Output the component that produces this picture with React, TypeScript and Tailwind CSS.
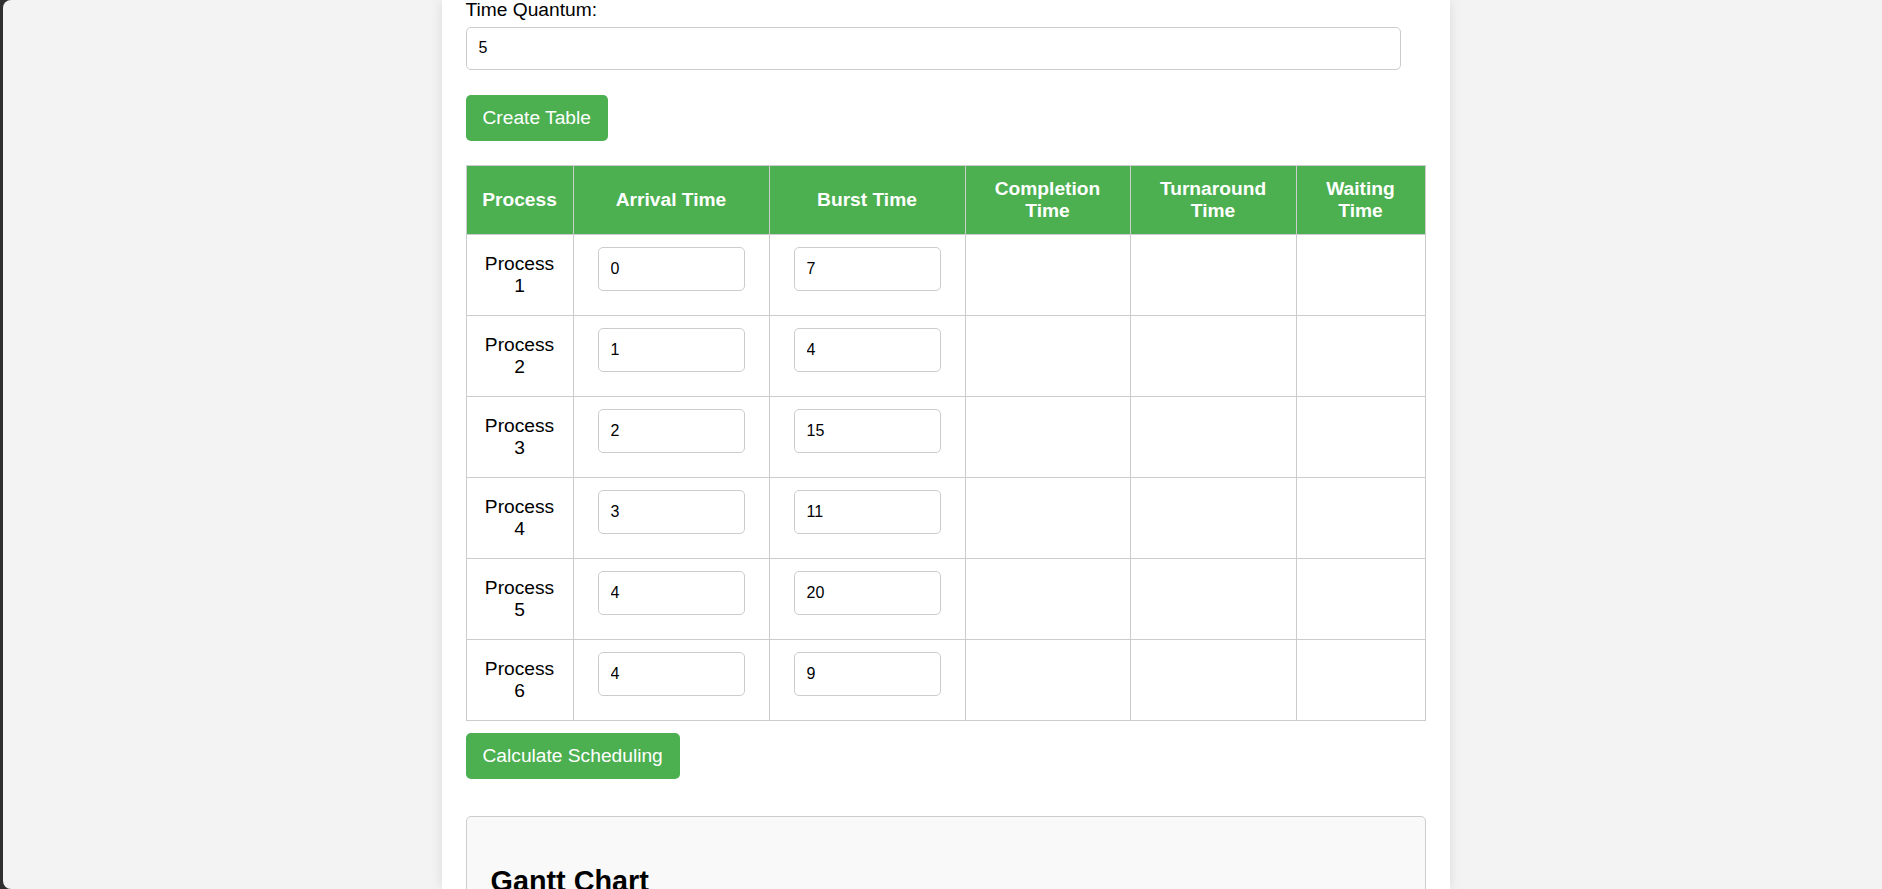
import React from "react";

const rows: [number, number][] = [
  [0, 7],
  [1, 4],
  [2, 15],
  [3, 11],
  [4, 20],
  [4, 9],
];

export default function App() {
  return (
    <div className="h-[889px] w-[1882px] overflow-hidden bg-[#2f2f2f] pl-[3px] font-['Liberation_Sans',Arial,sans-serif] text-black">
      <div className="flex h-full justify-center overflow-hidden rounded-l-[8px] bg-[#f3f3f3] pl-[6px]">
        <div className="w-[1008px] shrink-0 bg-white px-[24px] shadow-[0_0_12px_rgba(0,0,0,0.1)]">
          <label className="mt-[-1.5px] mb-[6px] block text-[19.2px] leading-[22px]">
            Time Quantum:
          </label>
          <input
            type="text"
            defaultValue="5"
            className="block h-[43.5px] w-[935px] rounded-[5px] border border-[#ccc] bg-white px-[12px] text-[16px] text-black outline-none"
          />
          <button className="mt-[25px] block h-[46px] rounded-[5px] bg-[#4caf50] px-[17px] text-[19.2px] leading-[22px] text-white">
            Create Table
          </button>

          <table className="mt-[24px] w-[959px] table-fixed border-collapse">
            <colgroup>
              <col className="w-[107px]" />
              <col className="w-[196px]" />
              <col className="w-[196px]" />
              <col className="w-[165px]" />
              <col className="w-[166px]" />
              <col className="w-[129px]" />
            </colgroup>
            <thead>
              <tr className="bg-[#4caf50] text-white">
                {["Process", "Arrival Time", "Burst Time", "Completion Time", "Turnaround Time", "Waiting Time"].map(
                  (h) => (
                    <th
                      key={h}
                      className="border border-[#ccc] p-[12px] text-center text-[19.2px] font-bold leading-[22px]"
                    >
                      {h}
                    </th>
                  )
                )}
              </tr>
            </thead>
            <tbody>
              {rows.map(([a, b], i) => (
                <tr key={i}>
                  <td className="border border-[#ccc] p-[12px] text-center align-middle text-[19.2px] leading-[22px]">
                    Process {i + 1}
                  </td>
                  <td className="border border-[#ccc] p-[12px] text-center align-middle">
                    <input
                      type="text"
                      defaultValue={String(a)}
                      className="mx-auto mb-[12px] block h-[44px] w-[147px] rounded-[5px] border border-[#ccc] bg-white px-[12px] text-[16px] text-black outline-none"
                    />
                  </td>
                  <td className="border border-[#ccc] p-[12px] text-center align-middle">
                    <input
                      type="text"
                      defaultValue={String(b)}
                      className="mx-auto mb-[12px] block h-[44px] w-[147px] rounded-[5px] border border-[#ccc] bg-white px-[12px] text-[16px] text-black outline-none"
                    />
                  </td>
                  <td className="border border-[#ccc] p-[12px]"></td>
                  <td className="border border-[#ccc] p-[12px]"></td>
                  <td className="border border-[#ccc] p-[12px]"></td>
                </tr>
              ))}
            </tbody>
          </table>

          <button className="mt-[12px] block h-[46px] rounded-[5px] bg-[#4caf50] px-[17px] text-[19.2px] leading-[22px] text-white">
            Calculate Scheduling
          </button>

          <div className="mt-[37px] h-[300px] rounded-[5px] border border-[#ccc] bg-[#f9f9f9] p-[24px]">
            <h2 className="mt-[24px] text-[28.8px] font-bold leading-[33px]">Gantt Chart</h2>
          </div>
        </div>
      </div>
    </div>
  );
}
